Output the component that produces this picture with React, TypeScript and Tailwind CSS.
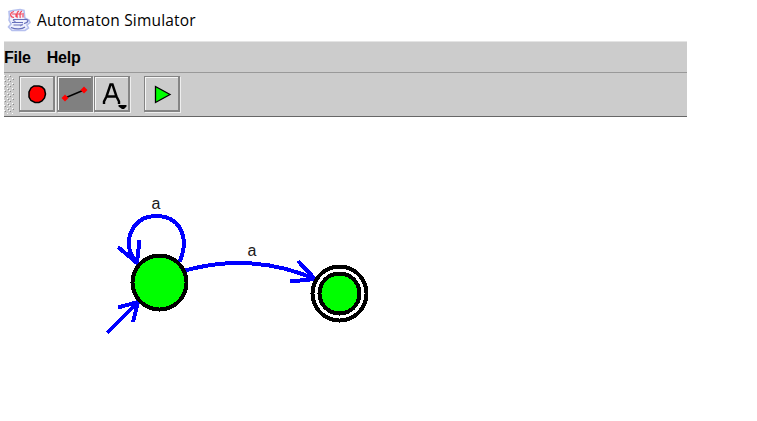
import React from 'react';

function CupIcon() {
  return (
    <svg width="24" height="24" viewBox="0 0 24 24" fill="none" className="shrink-0">
      <path d="M2 3.500 6 2.500 13 1.500l4 1 .8 7.500 4.200 2 1 2.500-3 2.500 1.500 3-3.500 2.500H5L1.500 19l2.500-3-2-4 .5-3z" fill="#eff1fd" stroke="#b5bfee" strokeWidth="1.6" />
      <path d="M6 11.500h12M5 14.500h11M6.500 17h9M4 19.500c5 2.200 11 1.800 14-.5M18 11.500c4-.5 4 3-1 4" stroke="#666fbb" strokeWidth="1.200" />
      <path d="M6 12l2.500 2M16 16l-3 2" stroke="#8389c8" strokeWidth="1.200" />
      <path d="M7 3.500C2 5 3 9 7 9.500M5 6h4v3M12 3c-4 2-1 4-2 7M15 3c-4 2-1 5-2 7M16 5v4.500M10 6h5" stroke="#f4475c" strokeWidth="1.200" />
    </svg>
  );
}

function ToolButton({ active = false, children }: { active?: boolean; children: React.ReactNode }) {
  return (
    <button
      className={`flex h-[36px] w-[36px] shrink-0 border border-[#848484] shadow-[inset_-1px_-1px_0_#858585,inset_1px_1px_0_#f5f5f5,1px_1px_0_#eeeeee] ${active ? 'bg-[#808080]' : 'bg-[#cccccc]'}`}
    >
      <svg width="34" height="34" viewBox="0 0 34 34" fill="none">{children}</svg>
    </button>
  );
}

function Toolbar() {
  return (
    <div className="flex h-[44px] items-start border-b border-[#666666] pt-[3px]">
      <svg width="10" height="39" className="-mt-px mr-[5px] shrink-0" shapeRendering="crispEdges">
        <defs>
          <pattern id="grip" width="5" height="5" patternUnits="userSpaceOnUse">
            <path d="M0 0h1v1H0zM2.500 2.500h1v1h-1z" fill="#fff" />
            <path d="M1 1h1v1H1zM3.500 3.500h1v1h-1z" fill="#888" />
          </pattern>
        </defs>
        <rect width="10" height="39" fill="url(#grip)" />
      </svg>
      <div className="flex gap-[2px]">
        <ToolButton>
          <path d="M14 9h5l3 1 2.500 2.500 1 4.500-1 4-2.500 3-3 1.500h-4l-4-2-2-3.500v-5l2-4z" fill="#f00" stroke="#000" strokeWidth="1.500" />
        </ToolButton>
        <ToolButton active>
          <path d="M7 21 26 13" stroke="#000" strokeWidth="1.600" />
          <path d="m7 17.500 3.500 3.500L7 24.500 3.500 21zM26 9.500l3.500 3.500-3.500 3.500-3.500-3.500z" fill="#f00" />
        </ToolButton>
        <div className="-ml-px">
          <ToolButton>
            <path d="M9 27V24.500L11.500 19.500 15.500 7.500h2L21.500 19.500 24 24.500V27M11.500 19.500h10" stroke="#000" strokeWidth="2.400" />
            <path d="M23.500 28h8v1.500l-2.500 2.500h-2l-3.500-2.500z" fill="#000" />
          </ToolButton>
        </div>
      </div>
      <div className="ml-[14px]">
        <ToolButton>
          <path d="M10.500 9.500v16l14.500-8z" fill="#0f0" stroke="#000" strokeWidth="1.300" />
        </ToolButton>
      </div>
    </div>
  );
}

function Diagram() {
  return (
    <svg width="757" height="304" viewBox="0 117 757 304" className="block" fill="none">
      <g stroke="#0000ff" strokeWidth="4" shapeRendering="crispEdges">
        <path d="M179.500 262C189 241 183 217 157 216C132 216 125 239 131 254L137 263" />
        <path d="M118 247 137 263 139.500 240" />
        <path d="M107 333 138 302M118 307.500 138 302 133 322" />
        <path d="M185 270.500Q252 252 315 279" />
        <path d="M298 261 315 279 290 281.500" />
      </g>
      <g stroke="#000" strokeWidth="4" shapeRendering="crispEdges">
        <circle cx="159.500" cy="282.500" r="27" fill="#0f0" />
        <circle cx="339.500" cy="293.500" r="27" fill="#fff" />
        <circle cx="339.500" cy="293.500" r="20" fill="#0f0" />
      </g>
      <g fill="#1a1a1a" fontFamily="Liberation Sans, sans-serif" fontSize="16">
        <text x="151.500" y="209">a</text>
        <text x="247.500" y="256">a</text>
      </g>
    </svg>
  );
}

export default function App() {
  return (
    <div className="h-[421px] w-[757px] overflow-hidden bg-white font-['Liberation_Sans',sans-serif] text-black">
      <header className="flex h-[41px] items-center pb-px pl-[7px]">
        <CupIcon />
        <h1 className="ml-[6px] whitespace-nowrap font-['Open_Sans',sans-serif] text-[15.500px] leading-5 tracking-[0.17px]">Automaton Simulator</h1>
      </header>
      <div className="ml-[4px] h-[76px] w-[683px] bg-[#cccccc]">
        <nav className="flex h-[32px] items-center gap-[16px] border-b border-t border-b-[#999999] border-t-[#e4e4e4] pt-[2px] text-[16px] font-bold tracking-[-0.2px]">
          <span>File</span>
          <span>Help</span>
        </nav>
        <Toolbar />
      </div>
      <Diagram />
    </div>
  );
}
